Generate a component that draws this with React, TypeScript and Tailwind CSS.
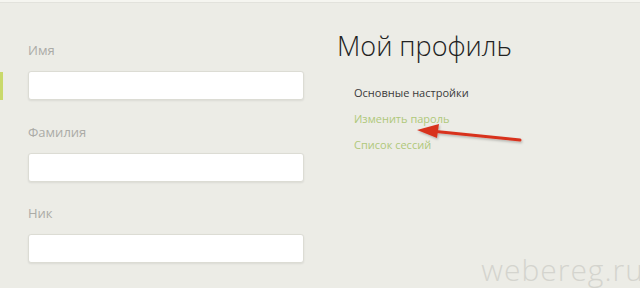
const fields = ['Имя', 'Фамилия', 'Ник'];

const links = [
  { label: 'Основные настройки', active: true },
  { label: 'Изменить пароль', active: false },
  { label: 'Список сессий', active: false },
];

function Arrow() {
  return (
    <svg className="absolute left-[410px] top-[120px]" width="120" height="30" viewBox="0 0 120 30">
      <defs>
        <filter id="sh" x="-10%" y="-50%" width="120%" height="200%">
          <feDropShadow dx="1" dy="1.5" stdDeviation="1" floodColor="#000" floodOpacity="0.25" />
        </filter>
      </defs>
      <g filter="url(#sh)">
        <line x1="26" y1="11.5" x2="110" y2="20" stroke="#d8321f" strokeWidth="3" strokeLinecap="round" />
        <polygon points="7,10 29,4 27,18" fill="#d8321f" />
      </g>
    </svg>
  );
}

export default function App() {
  return (
    <div
      className="relative w-[640px] h-[288px] overflow-hidden bg-[#ececE6] text-[#333]"
      style={{ fontFamily: '"Open Sans", "Liberation Sans", sans-serif' }}
    >
      <div className="h-[3px] bg-[#f5f5f0] border-b border-[#e2e2dc]" />
      <div className="absolute left-0 top-[72px] w-[3px] h-[28px] bg-[#c9d96b]" />

      <div className="flex">
        <div className="w-[304px] pl-[28px] pt-[38px] flex flex-col">
          {fields.map((f) => (
            <div key={f} className="flex flex-col mb-[22.5px]">
              <label className="text-[13px] leading-[18px] text-[#ababa6] mb-[12px]">{f}</label>
              <input className="h-[29px] w-full bg-white border border-[#dcdcd4] rounded-[3px] shadow-[0_1px_2px_rgba(0,0,0,0.08)] outline-none" />
            </div>
          ))}
        </div>

        <div className="pl-[32px] pt-[24px]">
          <h1 className="text-[27px] leading-[38px] font-light text-[#222] ml-[1px]">Мой профиль</h1>
          <ul className="mt-[19px] ml-[18px] flex flex-col gap-[8px]">
            {links.map((l) => (
              <li
                key={l.label}
                className={`text-[11px] leading-[18px] ${l.active ? 'text-[#3a3a3a]' : 'text-[#afc87a]'}`}
              >
                {l.label}
              </li>
            ))}
          </ul>
        </div>
      </div>

      <Arrow />

      <div className="absolute right-[-4px] bottom-[2px] text-[30px] leading-[32px] font-light text-[#d4d4ce] tracking-[1px]">
        webereg.ru
      </div>
    </div>
  );
}
